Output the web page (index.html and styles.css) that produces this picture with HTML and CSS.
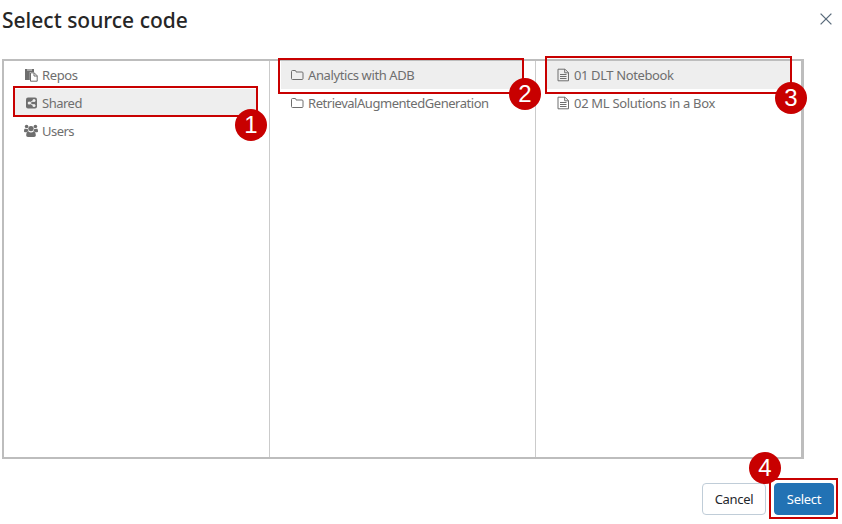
FILE: index.html
```html
<!DOCTYPE html>
<html lang="en">
<head>
<meta charset="utf-8">
<title>Select source code</title>
<link rel="stylesheet" href="styles.css">
</head>
<body>
<svg class="defs" aria-hidden="true">
  <symbol id="repos" viewBox="0 0 14 14"><path fill="currentColor" d="M1 1h9v3H5.800v8H1z"/><path fill="none" stroke="#fff" stroke-width=".8" d="M3 2h5"/><path fill="#fff" stroke="currentColor" d="M6.500 4.800h3.700l3 3v5.400H6.500z"/><path fill="none" stroke="currentColor" d="M10 4.800V8h3.200"/></symbol>
  <symbol id="shared" viewBox="0 0 14 14"><rect x="2" y="1.500" width="11" height="11" rx="2" fill="currentColor"/><path d="M10 4.500 5.200 7l4.800 2.500" fill="none" stroke="#eee"/><circle cx="10" cy="4.500" r="1.500" fill="#eee"/><circle cx="5.200" cy="7" r="1.500" fill="#eee"/><circle cx="10" cy="9.500" r="1.500" fill="#eee"/></symbol>
  <symbol id="users" viewBox="0 0 14 14"><g fill="currentColor"><circle cx="2.600" cy="2.500" r="1.800"/><circle cx="11.400" cy="2.500" r="1.800"/><circle cx="7" cy="4.600" r="2.700"/><path d="M0 7.500C0 5.500.5 4.500 1.200 4.500c.8.600 1.700.6 2.500.3 0 1 .4 1.800 1 2.400-.9 0-1.600.4-2.100 1H1C.4 8.200 0 8 0 7.500zM14 7.500c0-2-.5-3-1.200-3-.8.600-1.700.6-2.500.3 0 1-.4 1.800-1 2.400.9 0 1.600.4 2.100 1H13c.6 0 1-.2 1-.7zM2.200 11.300C2.200 9 3 7.400 4.400 7.400c1.500 1.300 3.700 1.300 5.200 0 1.400 0 2.200 1.600 2.200 3.900 0 1.100-.7 1.700-1.700 1.700H3.900c-1 0-1.700-.6-1.700-1.700z"/></g></symbol>
  <symbol id="folder" viewBox="0 0 14 14"><path fill="none" stroke="currentColor" d="M1.500 3.500q0-1 1-1h2.500q1 0 1 1V4h6q1 0 1 1v5.500q0 1-1 1H2.500q-1 0-1-1z"/></symbol>
  <symbol id="file" viewBox="0 0 14 14"><path fill="none" stroke="currentColor" d="M2 1.200h7l3.500 3.500v8.100H2zM8.700 1.200v3.600h3.800M4 6.500h6.500M4 8.500h6.500M4 10.500h6.500"/></symbol>
</svg>
<main class="dialog">
  <header class="header">
    <h1 class="title">Select source code</h1>
    <svg class="close" viewBox="0 0 12 12"><path d="m.6.600 10.800 10.800M11.400.6.600 11.400"/></svg>
  </header>
  <section class="browser">
    <div class="column">
      <div class="row"><svg><use href="#repos"/></svg><span>Repos</span></div>
      <div class="row selected"><svg><use href="#shared"/></svg><span class="shared">Shared</span></div>
      <div class="row"><svg><use href="#users"/></svg><span class="users">Users</span></div>
    </div>
    <div class="column">
      <div class="row selected"><svg><use href="#folder"/></svg><span>Analytics with ADB</span></div>
      <div class="row"><svg><use href="#folder"/></svg><span class="rag">RetrievalAugmentedGeneration</span></div>
    </div>
    <div class="column">
      <div class="row selected"><svg><use href="#file"/></svg><span>01 DLT Notebook</span></div>
      <div class="row"><svg><use href="#file"/></svg><span class="ml">02 ML Solutions in a Box</span></div>
    </div>
  </section>
  <footer class="footer">
    <button class="btn">Cancel</button>
    <button class="btn primary">Select</button>
  </footer>
</main>
<div class="mark mark1"><b>1</b></div>
<div class="mark mark2"><b>2</b></div>
<div class="mark mark3"><b>3</b></div>
<div class="mark mark4"><b>4</b></div>
</body>
</html>
```
FILE: styles.css
```css
* { box-sizing: border-box; }
body { margin: 0; width: 842px; height: 524px; overflow: hidden; position: relative; background: #fff; font-family: "Noto Sans", sans-serif; font-size: 13px; color: #6e6e6e; }
.defs { position: absolute; width: 0; height: 0; }
.dialog { display: flex; flex-direction: column; height: 524px; padding-left: 2px; }
.header { display: flex; justify-content: space-between; height: 59px; padding: 5px 10px 0 0; }
.title { margin: 0; font-size: 21px; line-height: 30px; font-weight: 500; color: #262626; }
.close { width: 12px; height: 12px; margin-top: 8px; fill: none; stroke: #5a6b7b; stroke-width: 1.3; }
.browser { display: grid; grid-template-columns: 266px 266px 265px; width: 802px; height: 400px; border: 2px solid #bdbdbd; border-right-width: 3px; }
.column { border-right: 1px solid #cbcbcb; padding: 0 11px; }
.column:last-child { border-right: 0; }
.row { display: flex; align-items: center; height: 28px; padding-left: 9px; gap: 4px; white-space: nowrap; letter-spacing: -.39px; }
.row svg { width: 14px; height: 14px; flex: none; }
.selected { background: #eee; }
.shared { letter-spacing: -.5px; }
.users { letter-spacing: -.55px; }
.rag { letter-spacing: -.46px; }
.ml { letter-spacing: -.31px; }
.footer { display: flex; justify-content: flex-end; gap: 8px; padding: 24px 8px 0 0; }
.btn { height: 32px; width: 64px; padding: 0; border: 1px solid #c0cdd8; border-radius: 4px; background: #fff; color: #1f272d; font: 13px "Noto Sans", sans-serif; letter-spacing: -.3px; }
.primary { width: 60px; background: #2272b4; border-color: #2272b4; color: #fff; }
.mark { position: absolute; border: 2px solid #c80000; }
.mark b { position: absolute; width: 32px; height: 32px; border-radius: 50%; background: #c80000; color: #fff; font: 24px/32px "Liberation Sans", sans-serif; text-align: center; }
.mark1 { left: 13px; top: 86px; width: 245px; height: 31px; }
.mark1 b { left: 220px; top: 21px; }
.mark2 { left: 278px; top: 58px; width: 246px; height: 36px; }
.mark2 b { left: 229px; top: 18px; }
.mark3 { left: 545px; top: 56px; width: 247px; height: 38px; }
.mark3 b { left: 228px; top: 24px; }
.mark4 { left: 769px; top: 478px; width: 69px; height: 41px; }
.mark4 b { left: -22px; top: -28px; }
```
